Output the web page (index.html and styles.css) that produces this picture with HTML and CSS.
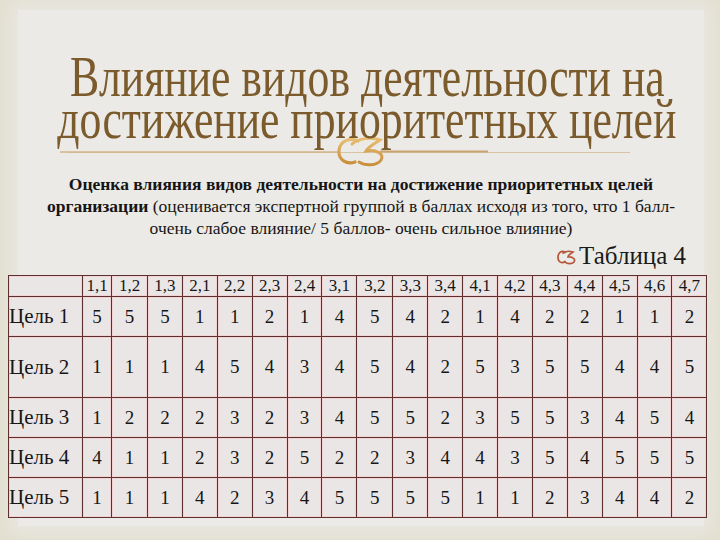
FILE: index.html
```html
<!DOCTYPE html>
<html lang="ru">
<head>
<meta charset="utf-8">
<link rel="stylesheet" href="styles.css">
</head>
<body>
<div class="slide">
  <div class="panel">
    <h1 class="title"><span class="line">Влияние видов деятельности на</span><span class="line">достижение приоритетных целей</span></h1>
    <div class="divider">
      <svg width="720" height="32" viewBox="0 0 720 32">
        <defs>
          <linearGradient id="gold" x1="0" y1="0" x2="0" y2="1">
            <stop offset="0" stop-color="#e6bd73"/>
            <stop offset="1" stop-color="#c98f3c"/>
          </linearGradient>
        </defs>
        <line x1="67" y1="16.5" x2="630" y2="16.5" stroke="#d9c4a2" stroke-width="1"/>
        <line x1="60" y1="16" x2="340" y2="16" stroke="#d3b58a" stroke-width="1.3"/>
        <line x1="380" y1="15.5" x2="488" y2="15.5" stroke="#c9a472" stroke-width="2"/>
        <path d="M358 5 C350 1 340 5 339 14 C338 24 347 29 355 26" fill="none" stroke="url(#gold)" stroke-width="3.2" stroke-linecap="round"/>
        <path d="M352 8 C358 2 372 1 380 4 C374 8 368 11 366 15 C376 13 385 18 381 24 C377 30 365 30 359 26" fill="none" stroke="url(#gold)" stroke-width="3" stroke-linecap="round"/>
      </svg>
    </div>
    <p class="subtitle"><b>Оценка влияния видов деятельности на достижение приоритетных целей<br>организации</b> (оценивается экспертной группой в баллах исходя из того, что 1 балл-<br>очень слабое влияние/ 5 баллов- очень сильное влияние)</p>
    <div class="caption">
      <svg class="bullet" width="20" height="15" viewBox="0 0 20 15">
        <path d="M8 2.5 C5 0 1 2 1 7.5 C1 12 5 14 8 11.5" fill="none" stroke="#b5563a" stroke-width="1.7" stroke-linecap="round"/>
        <path d="M6 3 C9 1 13 1 16 2 C13 4 11 5 11 7 C15 6.5 19 9 17 12 C15 14.5 10 14 8 12" fill="none" stroke="#b5563a" stroke-width="1.7" stroke-linecap="round"/>
      </svg>
      <span>Таблица 4</span>
    </div>
    <table class="grid">
      <colgroup>
        <col class="c-name"><col class="c-narrow"><col class="c-wide">
        <col><col><col><col><col><col><col class="c-wide2"><col><col><col><col><col><col><col><col><col>
      </colgroup>
      <thead>
        <tr class="head"><th></th><th>1,1</th><th>1,2</th><th>1,3</th><th>2,1</th><th>2,2</th><th>2,3</th><th>2,4</th><th>3,1</th><th>3,2</th><th>3,3</th><th>3,4</th><th>4,1</th><th>4,2</th><th>4,3</th><th>4,4</th><th>4,5</th><th>4,6</th><th>4,7</th></tr>
      </thead>
      <tbody>
        <tr class="r1"><td class="name">Цель 1</td><td>5</td><td>5</td><td>5</td><td>1</td><td>1</td><td>2</td><td>1</td><td>4</td><td>5</td><td>4</td><td>2</td><td>1</td><td>4</td><td>2</td><td>2</td><td>1</td><td>1</td><td>2</td></tr>
        <tr class="r2"><td class="name">Цель 2</td><td>1</td><td>1</td><td>1</td><td>4</td><td>5</td><td>4</td><td>3</td><td>4</td><td>5</td><td>4</td><td>2</td><td>5</td><td>3</td><td>5</td><td>5</td><td>4</td><td>4</td><td>5</td></tr>
        <tr class="r3"><td class="name">Цель 3</td><td>1</td><td>2</td><td>2</td><td>2</td><td>3</td><td>2</td><td>3</td><td>4</td><td>5</td><td>5</td><td>2</td><td>3</td><td>5</td><td>5</td><td>3</td><td>4</td><td>5</td><td>4</td></tr>
        <tr class="r3"><td class="name">Цель 4</td><td>4</td><td>1</td><td>1</td><td>2</td><td>3</td><td>2</td><td>5</td><td>2</td><td>2</td><td>3</td><td>4</td><td>4</td><td>3</td><td>5</td><td>4</td><td>5</td><td>5</td><td>5</td></tr>
        <tr class="r3"><td class="name">Цель 5</td><td>1</td><td>1</td><td>1</td><td>4</td><td>2</td><td>3</td><td>4</td><td>5</td><td>5</td><td>5</td><td>5</td><td>1</td><td>1</td><td>2</td><td>3</td><td>4</td><td>4</td><td>2</td></tr>
      </tbody>
    </table>
  </div>
</div>
</body>
</html>
```
FILE: styles.css
```css
html, body {
  margin: 0;
  padding: 0;
}
body {
  width: 720px;
  height: 540px;
  overflow: hidden;
  background: #e2dfd0;
  font-family: "Liberation Serif", "Times New Roman", serif;
  color: #111;
}
.slide {
  padding: 10px 16px 0 18px;
}
.panel {
  height: 516px;
  background: #ebeae6;
  box-shadow: 0 0 16px 8px #e9e7e0;
  padding-top: 34px;
  box-sizing: border-box;
}
.title {
  margin: 0 -16px 0 -18px;
  padding: 12px 0 12px 14px;
  display: flex;
  flex-direction: column;
  align-items: center;
  overflow: hidden;
  font-weight: normal;
  font-size: 56px;
  line-height: 42px;
  color: #7b5a2b;
}
.title .line {
  display: block;
  transform: scaleX(0.78);
  transform-origin: 50% 0;
  white-space: nowrap;
}
.divider {
  height: 32px;
  margin: -16px -16px 0 -18px;
  line-height: 0;
}
.subtitle {
  margin: 5px -18px 0 -18px;
  font-size: 17.5px;
  line-height: 22px;
  text-align: center;
  color: #151515;
}
.subtitle b {
  font-weight: bold;
}
.caption {
  display: flex;
  justify-content: flex-end;
  align-items: center;
  gap: 2px;
  margin: 4px 18px 6px 0;
  font-size: 25px;
  line-height: 26px;
  color: #1a1a1a;
}
.caption .bullet {
  margin-top: 3px;
}
.grid {
  margin-left: -10px;
  width: 697px;
  table-layout: fixed;
  border-collapse: collapse;
  background: #ebe6e6;
}
.grid col { width: 34.9px; }
.grid col.c-name { width: 74px; }
.grid col.c-narrow { width: 29px; }
.grid col.c-wide { width: 36px; }
.grid col.c-wide2 { width: 36px; }
.grid th, .grid td {
  border: 1px solid #5e2f2f;
  box-shadow: inset 0 0 0 1px #f1d3d3;
  padding: 0;
  text-align: center;
  font-weight: normal;
  color: #161616;
}
.grid th {
  height: 20px;
  line-height: 20px;
  font-size: 17px;
}
.grid td {
  font-size: 19px;
}
.grid td.name {
  text-align: left;
  font-size: 21px;
  padding-left: 0;
  white-space: nowrap;
}
.grid tr.r1 td { height: 39px; }
.grid tr.r2 td { height: 60px; }
.grid tr.r3 td { height: 39px; }
```
